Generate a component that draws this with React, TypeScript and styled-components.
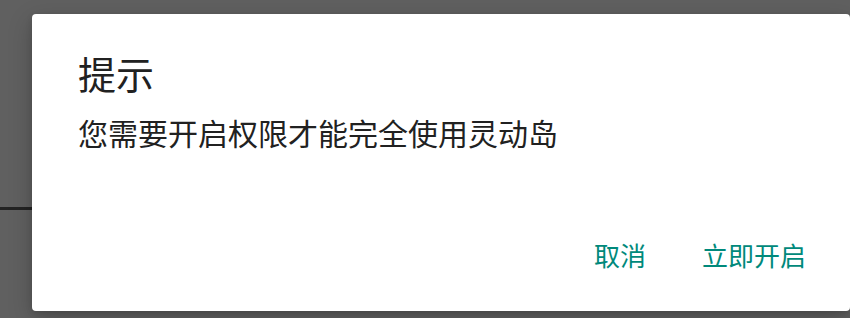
import React from 'react'
import styled, { createGlobalStyle } from 'styled-components'

const GlobalStyle = createGlobalStyle`
  html, body {
    margin: 0;
    padding: 0;
    background: #5e5e5e;
    overflow: hidden;
  }
  body {
    font-family: "Noto Sans CJK SC", "Noto Sans", sans-serif;
  }
`

export default function App() {
  return (
    <Screen>
      <GlobalStyle />
      <Backdrop>
        <TopArea />
        <Divider />
      </Backdrop>
      <Dialog>
        <Title>提示</Title>
        <Message>您需要开启权限才能完全使用灵动岛</Message>
        <Actions>
          <ActionButton>取消</ActionButton>
          <ActionButton>立即开启</ActionButton>
        </Actions>
      </Dialog>
    </Screen>
  )
}

const Screen = styled.div`
  position: relative;
  width: 850px;
  height: 318px;
  overflow: hidden;
  background: #606060;
`

const Backdrop = styled.div`
  display: flex;
  flex-direction: column;
`

const TopArea = styled.div`
  height: 207px;
`

const Divider = styled.div`
  height: 3px;
  background: #232323;
`

const Dialog = styled.div`
  position: absolute;
  left: 32px;
  top: 14px;
  width: 818px;
  height: 297px;
  box-sizing: border-box;
  background: #ffffff;
  border-radius: 4px;
  box-shadow: 0 8px 24px rgba(0, 0, 0, 0.22), 0 2px 6px rgba(0, 0, 0, 0.12);
  display: flex;
  flex-direction: column;
  padding: 32px 44px 38px 46px;
`

const Title = styled.div`
  font-size: 38px;
  line-height: 54px;
  color: #212121;
  letter-spacing: 0;
`

const Message = styled.div`
  margin-top: 12px;
  font-size: 30px;
  line-height: 40px;
  color: #212121;
`

const Actions = styled.div`
  margin-top: auto;
  display: flex;
  justify-content: flex-end;
  gap: 56px;
`

const ActionButton = styled.button`
  border: none;
  background: transparent;
  padding: 0;
  font-family: "Noto Sans CJK SC", "Noto Sans", sans-serif;
  font-size: 26px;
  line-height: 36px;
  color: #00897b;
  cursor: pointer;
`
